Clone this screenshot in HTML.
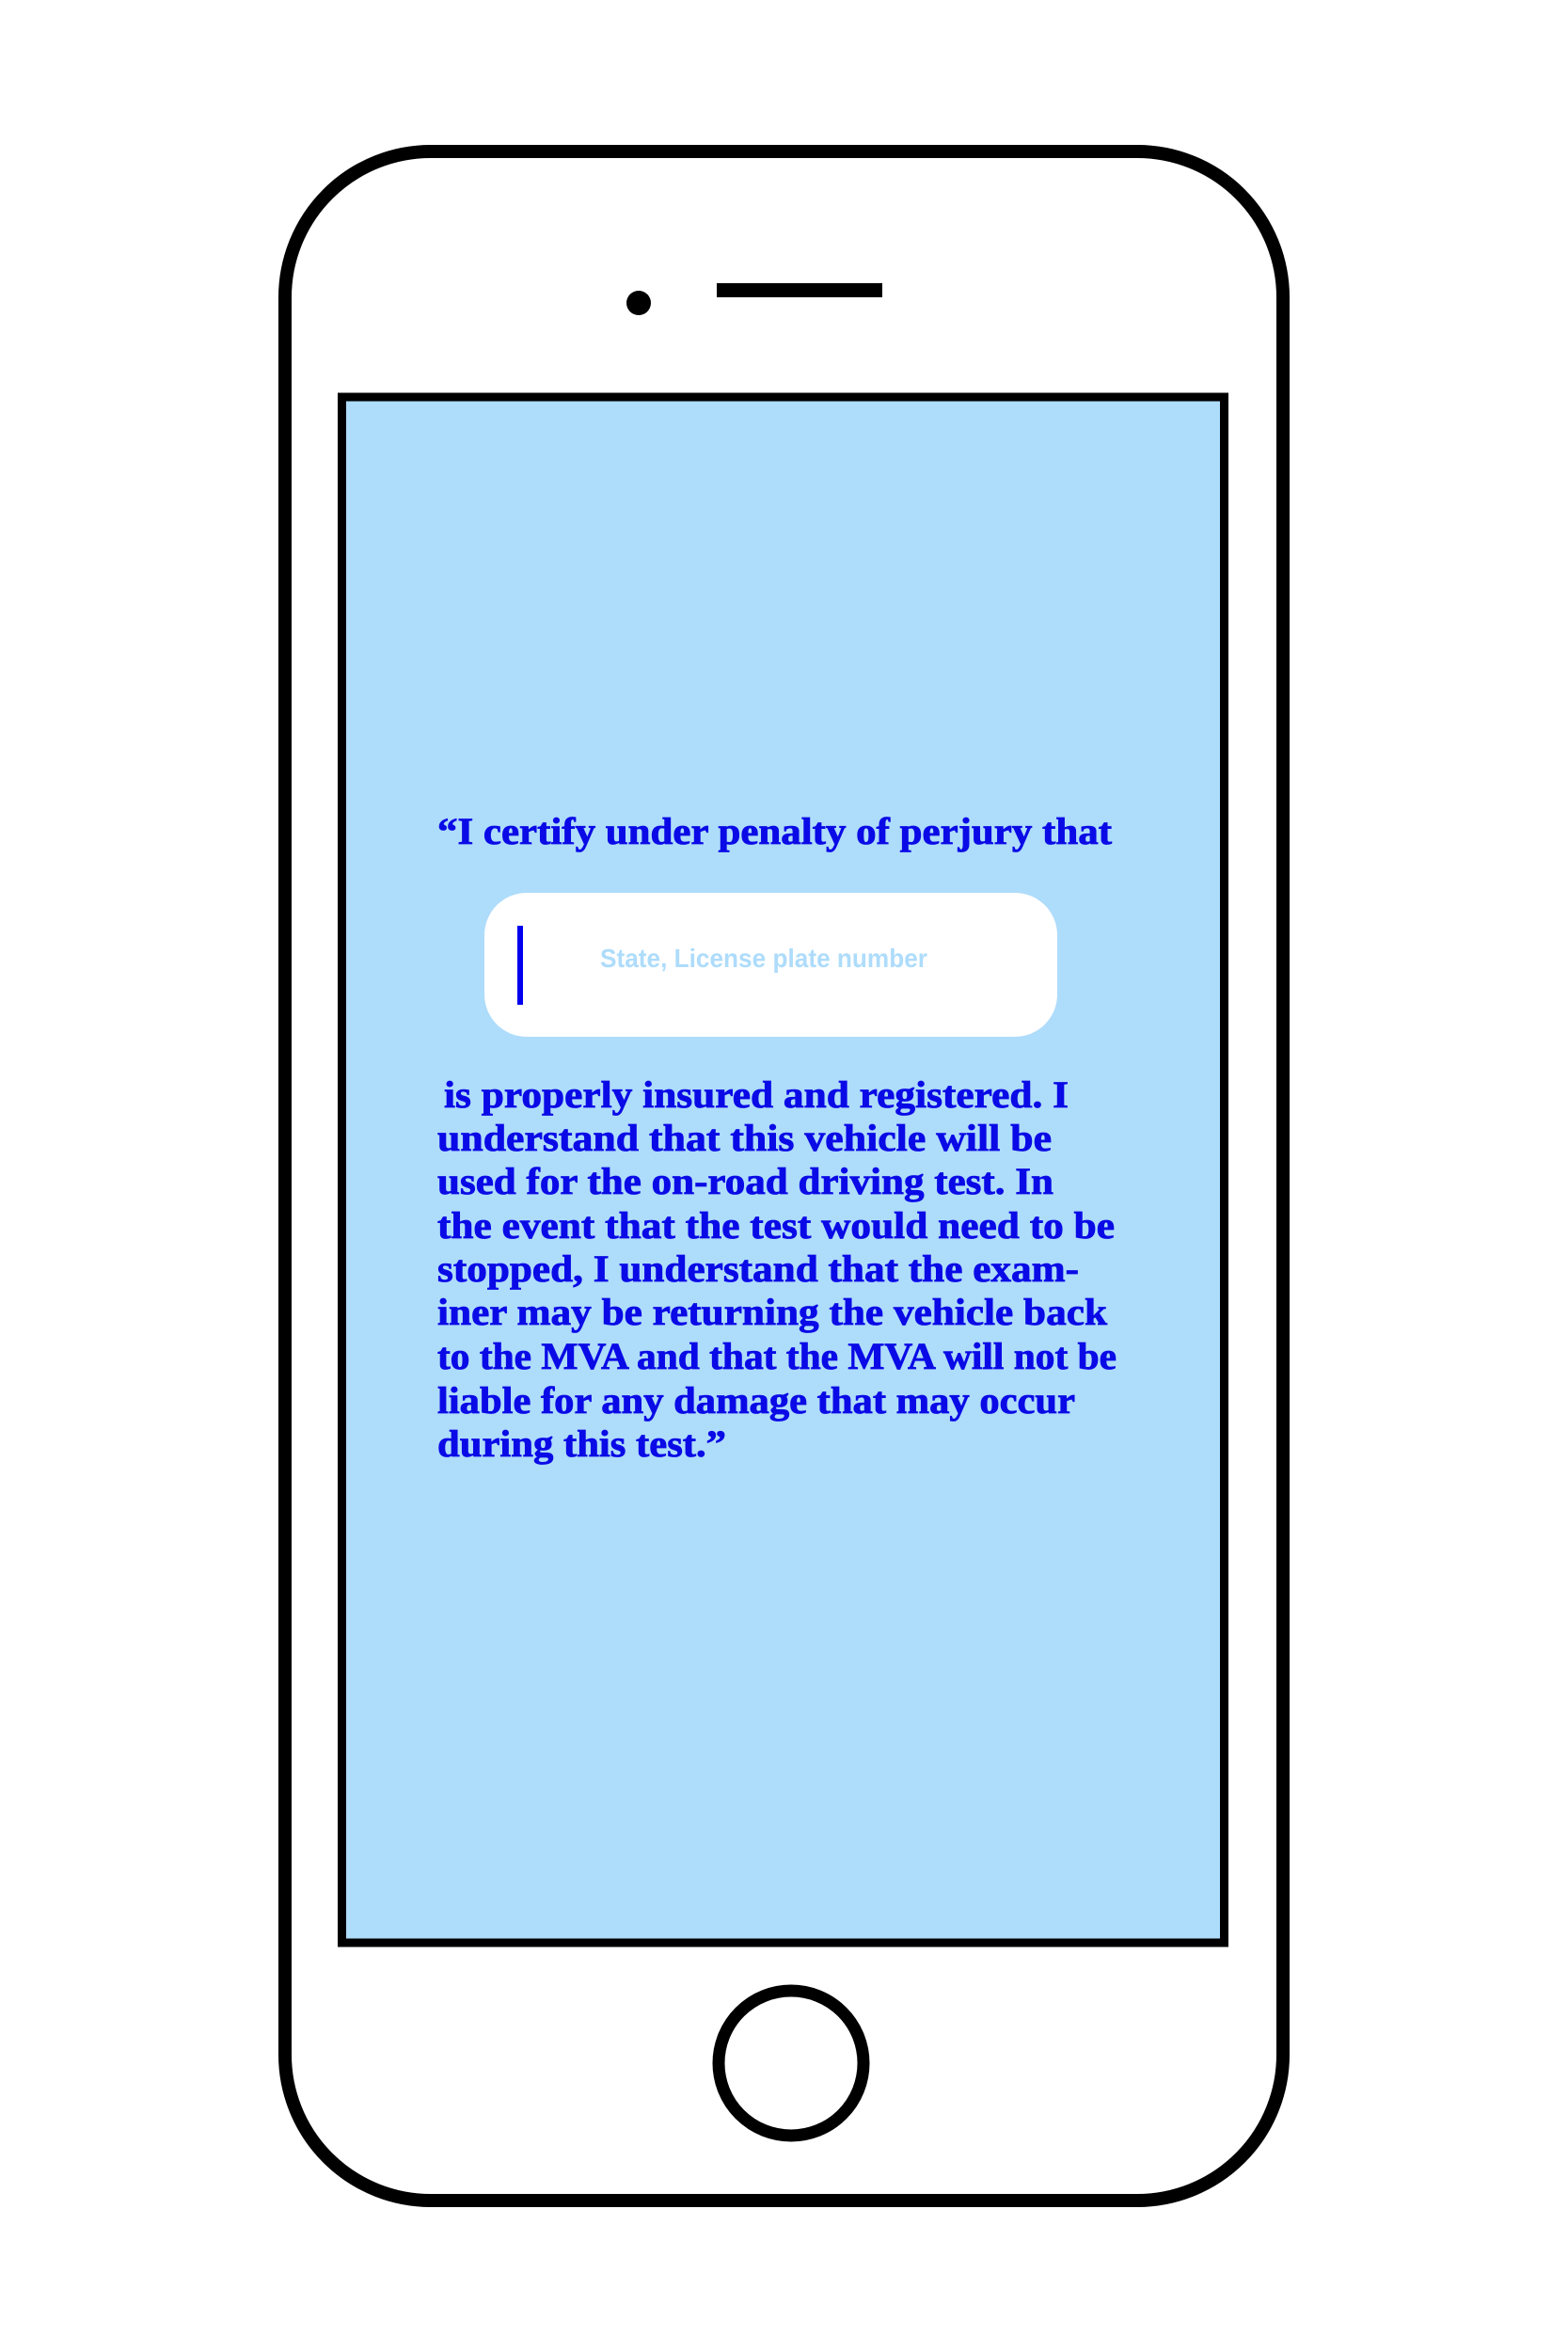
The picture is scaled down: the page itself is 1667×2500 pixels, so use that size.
<!DOCTYPE html>
<html><head><meta charset="utf-8"><style>html,body{margin:0;padding:0;background:#fff;}svg{display:block}</style></head>
<body>
<svg width="1667" height="2500" viewBox="0 0 1667 2500" xmlns="http://www.w3.org/2000/svg">
<rect x="303" y="161" width="1061" height="2178" rx="155" ry="155" fill="#fff" stroke="#000" stroke-width="14"/>
<ellipse cx="679" cy="322" rx="13" ry="13" fill="#000"/>
<rect x="762" y="301" width="176" height="15" fill="#000"/>
<rect x="363.5" y="422" width="938" height="1643" fill="#aedcfb" stroke="#000" stroke-width="9"/>
<circle cx="841" cy="2193" r="77" fill="none" stroke="#000" stroke-width="13"/>
<rect x="515" y="949" width="609" height="153" rx="45" fill="#fff"/>
<rect x="550" y="984" width="6" height="84" fill="#0000ee"/>
<g font-family="Liberation Sans, sans-serif" font-weight="bold" font-size="28" fill="#aedcfb">
<text x="638" y="1028" textLength="348" lengthAdjust="spacingAndGlyphs">State, License plate number</text>
</g>
<g font-family="Liberation Serif, serif" font-weight="bold" font-size="40" fill="#0a0ae6" stroke="#0a0ae6" stroke-width="0.8">
<text x="465" y="897" textLength="717" lengthAdjust="spacingAndGlyphs">“I certify under penalty of perjury that</text>
<text x="472" y="1177" textLength="664" lengthAdjust="spacingAndGlyphs">is properly insured and registered. I</text>
<text x="465" y="1223" textLength="653" lengthAdjust="spacingAndGlyphs">understand that this vehicle will be</text>
<text x="465" y="1269" textLength="655" lengthAdjust="spacingAndGlyphs">used for the on-road driving test. In</text>
<text x="465" y="1316" textLength="720" lengthAdjust="spacingAndGlyphs">the event that the test would need to be</text>
<text x="465" y="1362" textLength="682" lengthAdjust="spacingAndGlyphs">stopped, I understand that the exam-</text>
<text x="465" y="1408" textLength="712" lengthAdjust="spacingAndGlyphs">iner may be returning the vehicle back</text>
<text x="465" y="1455" textLength="722" lengthAdjust="spacingAndGlyphs">to the MVA and that the MVA will not be</text>
<text x="465" y="1502" textLength="678" lengthAdjust="spacingAndGlyphs">liable for any damage that may occur</text>
<text x="465" y="1548" textLength="307" lengthAdjust="spacingAndGlyphs">during this test.”</text>
</g>
</svg>
</body></html>
